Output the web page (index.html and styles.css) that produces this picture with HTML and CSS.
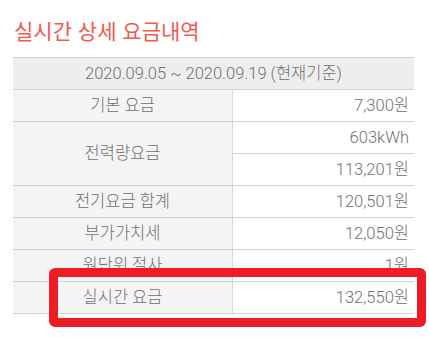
FILE: index.html
```html
<!DOCTYPE html>
<html lang="ko">
<head>
<meta charset="utf-8">
<link rel="stylesheet" href="styles.css">
</head>
<body>
<div class="wrap">
  <h1 class="title">실시간 상세 요금내역</h1>
  <table class="bill">
    <tr><th colspan="2" class="head">2020.09.05 ~ 2020.09.19 (현재기준)</th></tr>
    <tr><td class="lbl">기본 요금</td><td class="val">7,300원</td></tr>
    <tr><td class="lbl" rowspan="2">전력량요금</td><td class="val">603kWh</td></tr>
    <tr><td class="val">113,201원</td></tr>
    <tr><td class="lbl">전기요금 합계</td><td class="val">120,501원</td></tr>
    <tr><td class="lbl">부가가치세</td><td class="val">12,050원</td></tr>
    <tr><td class="lbl">원단위 절사</td><td class="val">1원</td></tr>
    <tr><td class="lbl">실시간 요금</td><td class="val">132,550원</td></tr>
  </table>
  <div class="highlight"></div>
</div>
</body>
</html>
```
FILE: styles.css
```css
html, body { margin: 0; padding: 0; background: #fff; }
body { font-family: Roboto, "Noto Sans CJK KR", sans-serif; min-height: 345px; }
.wrap { position: relative; padding: 16px 0 40px 13px; width: 401px; }
.title {
  margin: 0 0 13px 1px;
  font-size: 21px;
  font-weight: 400;
  line-height: 28px;
  color: #f2594f;
  font-family: "Noto Sans CJK KR", sans-serif;
}
.bill {
  width: 401px;
  border-collapse: collapse;
  font-size: 16.5px;
  font-weight: 300;
  color: #707070;
}
.bill th, .bill td {
  height: 31px;
  padding: 0;
  border-top: 1px solid #d2d2d2;
  border-bottom: 1px solid #d2d2d2;
  line-height: 20px;
}
.head {
  background: #eeeeee;
  font-weight: 300;
  text-align: center;
  border-top: 1px solid #c8c8c8;
}
.lbl {
  width: 219px;
  background: #f4f4f4;
  text-align: center;
  border-right: 1px solid #d8d8d8;
}
.val {
  text-align: right;
  padding-right: 5px !important;
  background: #fff;
}
.highlight {
  position: absolute;
  left: 49px;
  top: 268px;
  width: 359px;
  height: 41px;
  border: 9px solid #ee1d25;
  border-radius: 6px;
}
```
